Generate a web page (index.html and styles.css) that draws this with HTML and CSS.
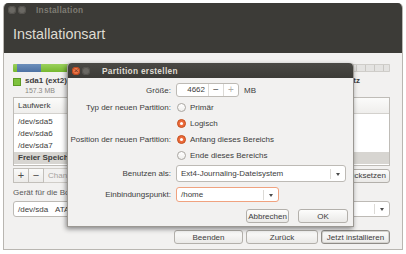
FILE: index.html
```html
<!DOCTYPE html>
<html lang="de">
<head>
    <meta charset="UTF-8">
    <title>Installation</title>
    <link rel="stylesheet" href="styles.css">
</head>
<body>

    <div class="window">
        <div class="titlebar">
            <span class="wbtn"></span>
            <span class="wbtn"></span>
            <span class="wtitle">Installation</span>
        </div>
        <div class="header">
            <h1>Installationsart</h1>
        </div>

        <div class="content">
            <!-- partition bar -->
            <div class="pbar">
                <span class="seg green" style="width:4px"></span>
                <span class="seg blue" style="width:24px"></span>
                <span class="seg green" style="width:60px"></span>
                <span class="seg blue" style="width:120px"></span>
                <span class="seg green" style="width:100px"></span>
                <span class="seg free"></span>
            </div>

            <div class="legend">
                <div class="litem">
                    <span class="swatch"></span>
                    <div>
                        <div class="lname">sda1 (ext2)</div>
                        <div class="lsize">157.3 MB</div>
                    </div>
                </div>
                <div class="litem last">
                    <span class="swatch grey"></span>
                    <div>
                        <div class="lname">freier Platz</div>
                        <div class="lsize">4.9 GB</div>
                    </div>
                </div>
            </div>

            <!-- partition table -->
            <div class="ptable">
                <div class="thead">Laufwerk</div>
                <div class="trow">/dev/sda5</div>
                <div class="trow">/dev/sda6</div>
                <div class="trow">/dev/sda7</div>
                <div class="trow selected">Freier Speicherplatz</div>
            </div>

            <div class="toolbar">
                <span class="tbtn">+</span>
                <span class="tbtn">&minus;</span>
                <span class="tlabel">Change…</span>
                <button class="btn revert">Zurücksetzen</button>
            </div>

            <div class="boot-label">Gerät für die Bootloader-Installation:</div>
            <div class="combo boot">
                <span class="ctext">/dev/sda&nbsp;&nbsp;&nbsp;ATA VBOX HARDDISK (8.6 GB)</span>
                <span class="carrow"></span>
            </div>

            <div class="actions">
                <button class="btn quit">Beenden</button>
                <button class="btn back">Zurück</button>
                <button class="btn install">Jetzt installieren</button>
            </div>
        </div>

        <!-- dialog window on top -->
        <div class="dialog">
            <div class="dtitlebar">
                <span class="wbtn close">&times;</span>
                <span class="wbtn"></span>
                <span class="dtitle">Partition erstellen</span>
            </div>
            <div class="dform">
                <label class="flabel r-spin">Größe:</label>
                <div class="fctrl r-spin">
                    <div class="spin">
                        <span class="sval">4662</span>
                        <span class="sbtn">&minus;</span>
                        <span class="sbtn off">+</span>
                    </div>
                    <span class="unit">MB</span>
                </div>

                <label class="flabel r-radio">Typ der neuen Partition:</label>
                <div class="fctrl r-radio"><span class="radio"></span>Primär</div>
                <span class="r-radio"></span>
                <div class="fctrl r-radio"><span class="radio on"></span>Logisch</div>

                <label class="flabel r-radio">Position der neuen Partition:</label>
                <div class="fctrl r-radio"><span class="radio on"></span>Anfang dieses Bereichs</div>
                <span class="r-radio"></span>
                <div class="fctrl r-radio"><span class="radio"></span>Ende dieses Bereichs</div>

                <label class="flabel r-use">Benutzen als:</label>
                <div class="fctrl r-use">
                    <div class="combo use">
                        <span class="ctext">Ext4-Journaling-Dateisystem</span>
                        <span class="carrow"></span>
                    </div>
                </div>

                <label class="flabel r-mount">Einbindungspunkt:</label>
                <div class="fctrl r-mount">
                    <div class="combo mount focus">
                        <span class="ctext">/home</span>
                        <span class="carrow"></span>
                    </div>
                </div>

                <span class="r-btn"></span>
                <div class="dbuttons r-btn">
                    <button class="btn cancel">Abbrechen</button>
                    <button class="btn ok">OK</button>
                </div>
            </div>
        </div>
    </div>

</body>
</html>
```

FILE: styles.css
```css
/* General styles */
body {
    margin: 0;
    background: #ffffff;
    font-family: "Liberation Sans", Arial, sans-serif;
    font-size: 8px;
    color: #3c3c3c;
}

.window {
    position: relative;
    width: 398px;
    height: 246px;
    margin: 3px 0 0 3px;
    background: #f2f1f0;
    border: 1px solid #b9b6b1;
    border-top: none;
    border-radius: 5px 5px 0 0;
    overflow: hidden;
}

/* Title bar + header */
.titlebar {
    height: 14px;
    display: flex;
    align-items: center;
    padding-left: 4px;
    background: #3c3b37;
}

.wbtn {
    width: 8px;
    height: 8px;
    margin-right: 2px;
    border-radius: 50%;
    background: #6a6863;
    box-shadow: inset 0 0 0 1px #55534e;
    display: inline-flex;
    align-items: center;
    justify-content: center;
}

.wtitle {
    margin-left: 8px;
    font-weight: bold;
    font-size: 8.3px;
    color: #7e7b74;
    letter-spacing: 0.3px;
}

.header {
    background: #3c3b37;
    padding: 8px 9px 10px;
}

.header h1 {
    margin: 0;
    font-weight: normal;
    font-size: 14.3px;
    line-height: 18px;
    color: #dfdbd2;
}

.content {
    padding: 11px 12px 0 9px;
}

/* Partition bar */
.pbar {
    display: flex;
    height: 8px;
    border-radius: 1px;
    overflow: hidden;
}

.seg.green {
    background: linear-gradient(#9bd15c, #76b82f);
}

.seg.blue {
    background: linear-gradient(#6d8fbb, #4e72a3);
}

.seg.free {
    flex: 1;
    background: repeating-linear-gradient(90deg, #e4e3e1 0, #e4e3e1 8px, #c9c7c3 8px, #c9c7c3 9px);
    box-shadow: inset 0 0 0 1px #cfcdc9;
}

.legend {
    display: flex;
    margin-top: 4px;
}

.litem {
    display: flex;
    align-items: flex-start;
}

.litem.last {
    margin-left: auto;
    margin-right: 30px;
}

.swatch {
    width: 6px;
    height: 6px;
    margin: 2px 4px 0 0;
    background: #7ec23e;
    border: 0.5px solid #5d9a23;
}

.swatch.grey {
    background: #e4e3e1;
    border-color: #b5b2ad;
}

.lname {
    font-weight: bold;
    line-height: 10px;
    color: #3c3c3c;
}

.lsize {
    font-size: 7px;
    line-height: 9px;
    color: #8a8883;
}

/* Table */
.ptable {
    margin-top: 2px;
    height: 67px;
    background: #ffffff;
    border: 1px solid #bfbcb7;
}

.thead {
    height: 15px;
    line-height: 15px;
    padding-left: 4px;
    background: linear-gradient(#fbfbfa, #efeeec);
    border-bottom: 1px solid #d3d1cd;
    margin-bottom: 2px;
}

.trow {
    height: 12px;
    line-height: 12px;
    padding-left: 4px;
}

.trow.selected {
    background: #d7d5d1;
    font-weight: bold;
}

.toolbar {
    display: flex;
    align-items: center;
    height: 15px;
    margin-top: 2px;
}

.tbtn {
    width: 14px;
    height: 13px;
    line-height: 12px;
    text-align: center;
    font-size: 11px;
    border: 1px solid #c2bfba;
    background: linear-gradient(#fafaf9, #ecebe9);
    color: #4c4c4c;
}

.tbtn + .tbtn {
    border-left: none;
}

.tlabel {
    padding: 0 4px;
    height: 13px;
    line-height: 13px;
    border: 1px solid #d0cdc8;
    border-left: none;
    color: #a5a29d;
}

.btn {
    font-family: inherit;
    font-size: 8px;
    color: #3c3c3c;
    height: 14px;
    padding: 0;
    border: 1px solid #b3b0ab;
    border-radius: 3px;
    background: linear-gradient(#fdfdfc, #eae9e7);
}

.revert {
    margin-left: auto;
    padding: 0 3px;
}

.boot-label {
    margin-top: 4px;
    line-height: 11px;
    color: #5a5a5a;
}

/* Combo boxes */
.combo {
    display: flex;
    align-items: center;
    background: #ffffff;
    border: 1px solid #bdbab5;
    border-radius: 3px;
    box-sizing: border-box;
}

.combo .ctext {
    flex: 1;
    padding-left: 4px;
    white-space: nowrap;
    overflow: hidden;
}

.carrow {
    width: 14px;
    height: 10px;
    border-left: 1px solid #dcdad6;
    position: relative;
}

.carrow::after {
    content: "";
    position: absolute;
    left: 5px;
    top: 4px;
    border-left: 2.5px solid transparent;
    border-right: 2.5px solid transparent;
    border-top: 3px solid #4c4c4c;
}

.combo.boot {
    margin-top: 3px;
    height: 16px;
}

.actions {
    display: flex;
    justify-content: flex-end;
    margin-top: 13px;
}

.actions .btn {
    height: 14px;
    margin-left: 3px;
}

.quit {
    width: 69px;
}

.back {
    width: 72px;
}

.install {
    width: 69px;
    border-color: #8f8c87;
    box-shadow: inset 0 0 0 1px #d6d4d0;
}

/* Dialog */
.dialog {
    position: absolute;
    left: 63px;
    top: 60px;
    width: 285px;
    height: 163px;
    background: #f2f1f0;
    border: 1px solid #9b9893;
    border-top: none;
    border-radius: 4px 4px 0 0;
    box-shadow: -1px 2px 5px rgba(0, 0, 0, 0.45);
}

.dtitlebar {
    height: 15px;
    display: flex;
    align-items: center;
    padding-left: 4px;
    background: linear-gradient(#4a4945, #3c3b37);
    border-radius: 4px 4px 0 0;
}

.wbtn.close {
    background: radial-gradient(circle at 50% 40%, #f58a5c, #e0562a);
    box-shadow: inset 0 0 0 1px #b9481f;
    color: #6b2a12;
    font-size: 8px;
    line-height: 8px;
}

.dtitle {
    margin-left: 10px;
    font-weight: bold;
    font-size: 8.3px;
    color: #dfdbd2;
    letter-spacing: 0.3px;
}

.dform {
    display: grid;
    grid-template-columns: 103px 1fr;
    column-gap: 5px;
    padding: 5px 5px 0 0;
}

.flabel {
    display: flex;
    align-items: center;
    justify-content: flex-end;
    white-space: nowrap;
}

.fctrl {
    display: flex;
    align-items: center;
}

/* row heights, shared by label and control */
.r-spin {
    height: 14px;
    margin-bottom: 2px;
}

.r-radio {
    height: 16px;
}

.r-use {
    height: 17px;
    margin-top: 2px;
}

.r-mount {
    height: 15px;
    margin-top: 5px;
}

.r-btn {
    height: 14px;
    margin-top: 7px;
}

.spin {
    display: flex;
    width: 63px;
    height: 14px;
    background: #ffffff;
    border: 1px solid #bdbab5;
    border-radius: 3px;
    box-sizing: border-box;
}

.sval {
    flex: 1;
    text-align: right;
    padding-right: 3px;
    line-height: 12px;
}

.sbtn {
    width: 14px;
    line-height: 12px;
    text-align: center;
    font-size: 10px;
    border-left: 1px solid #dcdad6;
    color: #555;
}

.sbtn.off {
    color: #b0aea9;
}

.unit {
    margin-left: 5px;
}

.radio {
    width: 9px;
    height: 9px;
    margin: 0 4px 0 1px;
    border-radius: 50%;
    background: linear-gradient(#ffffff, #efeeec);
    border: 1px solid #a9a6a1;
    box-sizing: border-box;
    position: relative;
}

.radio.on {
    background: #ec6a3b;
    border-color: #c4511f;
}

.radio.on::after {
    content: "";
    position: absolute;
    left: 2px;
    top: 2px;
    width: 3px;
    height: 3px;
    border-radius: 50%;
    background: #ffffff;
}

.combo.use {
    width: 170px;
    height: 17px;
}

.combo.mount {
    width: 103px;
    height: 15px;
}

.combo.focus {
    border-color: #f0a27f;
}

.dbuttons {
    display: flex;
    justify-content: flex-end;
    gap: 9px;
}

.cancel {
    width: 43px;
}

.ok {
    width: 50px;
}
```
